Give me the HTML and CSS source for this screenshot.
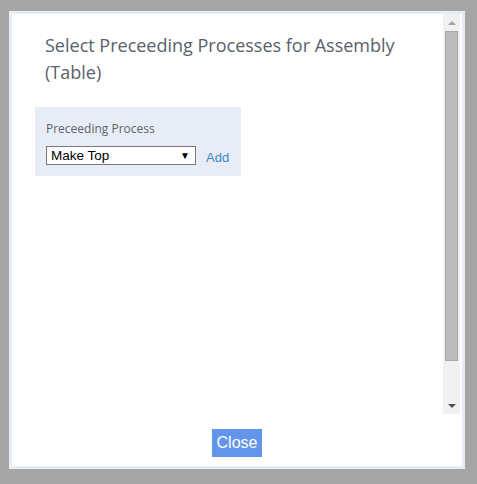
FILE: index.html
```html
<!DOCTYPE html>
<html>
<head>
<meta charset="utf-8">
<link rel="stylesheet" href="styles.css">
</head>
<body>
<div class="dialog">
  <div class="body">
    <div class="content">
      <h1 class="title">Select Preceeding Processes for Assembly (Table)</h1>
      <div class="panel">
        <div class="label">Preceeding Process</div>
        <div class="row">
          <div class="select"><span>Make Top</span><span class="caret">▼</span></div>
          <a class="add">Add</a>
        </div>
      </div>
    </div>
    <div class="scrollbar">
      <div class="arrow up"></div>
      <div class="track"><div class="thumb"></div></div>
      <div class="arrow down"></div>
    </div>
  </div>
  <div class="footer">
    <button class="close">Close</button>
  </div>
</div>
</body>
</html>
```
FILE: styles.css
```css
html, body { margin: 0; padding: 0; }
body {
  background: #a5a5a5;
  width: 477px;
  height: 484px;
  overflow: hidden;
  font-family: "Open Sans", "Noto Sans", sans-serif;
}
.dialog {
  margin: 11px 0 0 9px;
  width: 450px;
  height: 452px;
  border: 3px solid #e8edf5;
  background: #fff;
  display: flex;
  flex-direction: column;
}
.body {
  height: 400px;
  display: flex;
  padding-right: 2px;
}
.content {
  flex: 1;
  padding: 0 0 0 23px;
}
.title {
  margin: 18px 0 0 10px;
  font-weight: normal;
  font-size: 18px;
  line-height: 27px;
  color: #59616b;
  width: 380px;
}
.panel {
  margin-top: 21px;
  width: 195px;
  height: 69px;
  background: #e8edf5;
  padding-left: 11px;
  box-sizing: content-box;
}
.label {
  padding-top: 14px;
  font-size: 12px;
  line-height: 16px;
  color: #5c646e;
}
.row {
  display: flex;
  align-items: center;
  margin-top: 9px;
}
.select {
  width: 150px;
  height: 19px;
  box-sizing: border-box;
  border: 1px solid #7a7a7a;
  background: #fff;
  display: flex;
  justify-content: space-between;
  align-items: center;
  padding: 0 5px 0 4px;
  font-family: "Liberation Sans", Arial, sans-serif;
  font-size: 13.5px;
  color: #000;
}
.caret { font-size: 10px; }
.add {
  margin-left: 10px;
  font-family: "Liberation Sans", Arial, sans-serif;
  font-size: 13px;
  color: #3a87c9;
  margin-top: 3px;
}
.scrollbar {
  width: 17px;
  background: #f1f1f1;
  display: flex;
  flex-direction: column;
}
.arrow {
  height: 17px;
  display: flex;
  align-items: center;
  justify-content: center;
}
.arrow.up::before {
  content: "";
  border-left: 4px solid transparent;
  border-right: 4px solid transparent;
  border-bottom: 4px solid #a3a3a3;
}
.arrow.down::before {
  content: "";
  border-left: 4px solid transparent;
  border-right: 4px solid transparent;
  border-top: 4px solid #505050;
}
.track {
  flex: 1;
  padding: 0 2px;
}
.thumb {
  height: 330px;
  box-sizing: border-box;
  background: #bcbcbc;
  border: 1px solid #a8a8a8;
}
.footer {
  flex: 1;
  display: flex;
  justify-content: center;
  padding-top: 15px;
}
.close {
  width: 50px;
  height: 28px;
  background: #6495ed;
  border: none;
  color: #fff;
  font-family: "Liberation Sans", Arial, sans-serif;
  font-size: 16px;
  padding: 0;
}
```
